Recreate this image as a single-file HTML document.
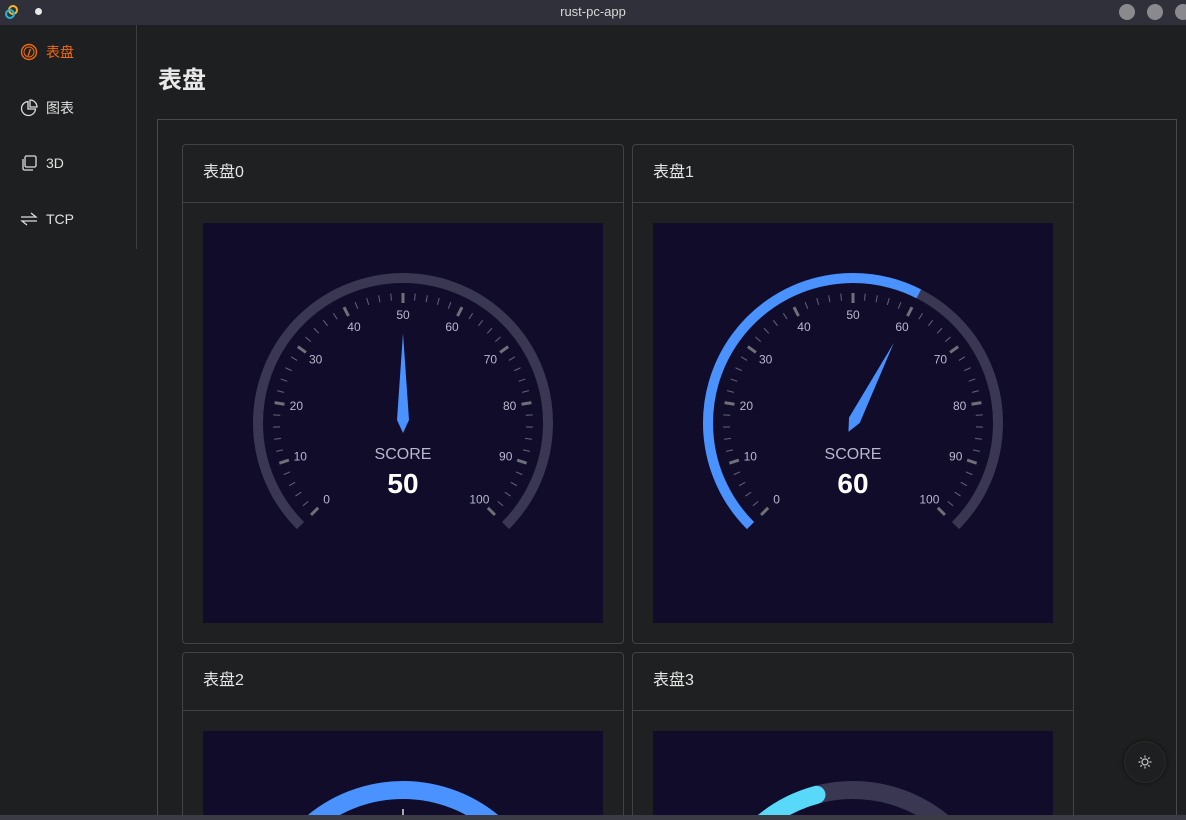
<!DOCTYPE html>
<html style="width:1186px;height:820px;overflow:hidden"><head><meta charset="utf-8">
<style>
*{margin:0;padding:0;box-sizing:border-box}
body{width:1186px;height:820px;overflow:hidden;background:#1e1f20;font-family:"Liberation Sans","Noto Sans CJK SC",sans-serif;color:#e5e5e5;position:relative}
#wrap{position:absolute;left:0;top:0;width:1186px;height:820px;overflow:hidden}
.tb{position:absolute;left:0;top:0;width:1186px;height:25px;background:#2f3039;}
.tb .t{position:absolute;left:0;width:1186px;top:4px;text-align:center;font-size:13px;color:#d8d8d8}
.tb .c{position:absolute;top:4px;width:16px;height:16px;border-radius:50%;background:#8a8a8e}
.side{position:absolute;left:0;top:25px;width:137px;height:224px;border-right:1px solid #3e3e3e}
.it{position:absolute;left:20px;font-size:14px;color:#e0e0e0;display:flex;align-items:center}
.it svg{margin-right:8px}
h1{position:absolute;left:158px;top:66px;font-size:24px;line-height:30px;font-weight:bold;color:#e8e8e8}
.box{position:absolute;left:157px;top:119px;width:1020px;height:701px;border:1px solid #4a4a4a;border-bottom:none}
.card{position:absolute;width:442px;height:500px;border:1px solid #414243;border-radius:4px;background:#1f2021;overflow:hidden}
.card.s{height:168px;border-bottom:none;border-radius:4px 4px 0 0}
.card .h{height:58px;border-bottom:1px solid #414243;padding:0 20px;line-height:55px;font-size:16px;color:#e5e5e5}
.card .ch{position:absolute;left:20px;top:78px;width:400px;height:400px;background:#100c2a;overflow:hidden}
.card.s .ch{height:89px}
.bb{position:absolute;left:0;top:815px;width:1186px;height:5px;background:#3a3b45;z-index:5}
.fab{position:absolute;left:1124px;top:741px;width:42px;height:42px;border-radius:50%;background:#1e1f20;box-shadow:0 0 4px rgba(0,0,0,.6);border:1px solid #2a2a2a}
</style></head><body><div id="wrap">
<div class="tb">
<svg style="position:absolute;left:4px;top:4px" width="16" height="16" viewBox="0 0 16 16"><circle cx="9" cy="6" r="4" fill="none" stroke="#f5b820" stroke-width="2"/><circle cx="6" cy="10" r="4" fill="none" stroke="#23b5d3" stroke-width="2"/></svg>
<div style="position:absolute;left:35px;top:8px;width:7px;height:7px;border-radius:50%;background:#e8e8e8"></div>
<div class="t">rust-pc-app</div>
<div class="c" style="left:1119px"></div><div class="c" style="left:1147px"></div>
<div style="position:absolute;left:1175px;top:4px;width:11px;height:16px;overflow:hidden"><div class="c" style="left:0;top:0"></div></div>
</div>
<div class="side">
<div class="it" style="top:17px;color:#f06a0f"><svg width="18" height="18" viewBox="0 0 18 18"><circle cx="9" cy="9" r="7.5" fill="none" stroke="#f06a0f" stroke-width="1.4"/><circle cx="9" cy="9" r="5" fill="none" stroke="#f06a0f" stroke-width="1"/><path d="M8 13 L10.5 6" stroke="#f06a0f" stroke-width="1.4"/></svg>表盘</div>
<div class="it" style="top:73px"><svg width="18" height="18" viewBox="0 0 18 18"><path d="M8 2.5 A7 7 0 1 0 15.5 10 L8 10 Z" fill="none" stroke="#ddd" stroke-width="1.3"/><path d="M10 1 A7 7 0 0 1 17 8 L10 8 Z" fill="none" stroke="#ddd" stroke-width="1.3"/></svg>图表</div>
<div class="it" style="top:129px"><svg width="18" height="18" viewBox="0 0 18 18"><rect x="5" y="2" width="11" height="11" rx="1.5" fill="none" stroke="#ddd" stroke-width="1.3"/><path d="M3 5 V14.5 a1.5 1.5 0 0 0 1.5 1.5 H13" fill="none" stroke="#ddd" stroke-width="1.3"/></svg>3D</div>
<div class="it" style="top:185px"><svg width="18" height="18" viewBox="0 0 18 18"><path d="M1 7 H16 L11 3 M17 11 H2 L7 15" fill="none" stroke="#ddd" stroke-width="1.3"/></svg>TCP</div>
</div>
<h1>表盘</h1>
<div class="box"></div>
<div class="card" style="left:182px;top:144px"><div class="h">表盘0</div><div class="ch"><svg id="g0" width="400" height="400"></svg></div></div>
<div class="card" style="left:632px;top:144px"><div class="h">表盘1</div><div class="ch"><svg id="g1" width="400" height="400"></svg></div></div>
<div class="card s" style="left:182px;top:652px"><div class="h">表盘2</div><div class="ch"><svg width="400" height="89" viewBox="0 0 400 89"><circle cx="200" cy="200" r="141" fill="none" stroke="#4992ff" stroke-width="18"/><rect x="199" y="78" width="2" height="11" fill="#aaa"/></svg></div></div>
<div class="card s" style="left:632px;top:652px"><div class="h">表盘3</div><div class="ch"><svg id="g3" width="400" height="89" viewBox="0 0 400 89"></svg></div></div>
<div class="fab"><svg style="position:absolute;left:13px;top:13px" width="14" height="14" viewBox="0 0 14 14"><circle cx="7" cy="7" r="3" fill="none" stroke="#ccc" stroke-width="1.2"/><path d="M7 0.5V2.5M7 11.5V13.5M0.5 7H2.5M11.5 7H13.5M2.4 2.4L3.8 3.8M10.2 10.2L11.6 11.6M2.4 11.6L3.8 10.2M10.2 3.8L11.6 2.4" stroke="#ccc" stroke-width="1.2"/></svg></div>
<div class="bb"></div>
</div>
<script>
var NS="http://www.w3.org/2000/svg";
function el(s,t,a){var e=document.createElementNS(NS,t);for(var k in a)e.setAttribute(k,a[k]);s.appendChild(e);return e}
function pt(cx,cy,r,deg){var a=deg*Math.PI/180;return [cx+r*Math.cos(a),cy-r*Math.sin(a)]}
function arc(cx,cy,r,a1,a2){var p=pt(cx,cy,r,a1),q=pt(cx,cy,r,a2);var large=(a1-a2)>180?1:0;return "M"+p[0]+" "+p[1]+" A"+r+" "+r+" 0 "+large+" 1 "+q[0]+" "+q[1]}
function gauge(id,val,prog){
var s=document.getElementById(id),cx=200,cy=200;
el(s,"path",{d:arc(cx,cy,145,225,-45),fill:"none",stroke:"#3a3753","stroke-width":10});
var va=225-val/100*270;
if(prog)el(s,"path",{d:arc(cx,cy,145,225,va),fill:"none",stroke:"#4992ff","stroke-width":10});
for(var i=0;i<=50;i++){var a=225-i*5.4;var maj=i%5==0;
var p=pt(cx,cy,maj?120:123,a),q=pt(cx,cy,130,a);
el(s,"line",{x1:p[0],y1:p[1],x2:q[0],y2:q[1],stroke:maj?"#6e7079":"#63677a","stroke-width":maj?3:1});
if(maj){var l=pt(cx,cy,108,a);var t=el(s,"text",{x:l[0],y:l[1]+4,"text-anchor":"middle","font-size":12,fill:"#b9b8ce","font-family":"Liberation Sans, sans-serif"});t.textContent=i*2;}}
var r=(90-va);
var g=el(s,"g",{transform:"rotate("+r+" "+cx+" "+cy+")"});
el(g,"polygon",{points:(cx)+","+(cy-90)+" "+(cx+6)+","+(cy-3)+" "+cx+","+(cy+10)+" "+(cx-6)+","+(cy-3),fill:"#4992ff"});
var t1=el(s,"text",{x:cx,y:cy+36,"text-anchor":"middle","font-size":16,fill:"#b9b8ce","font-family":"Liberation Sans, sans-serif"});t1.textContent="SCORE";
var t2=el(s,"text",{x:cx,y:cy+70,"text-anchor":"middle","font-size":28,"font-weight":"bold",fill:"#ffffff","font-family":"Liberation Sans, sans-serif"});t2.textContent=val;
}
gauge("g0",50,false);gauge("g1",60,true);
var s3=document.getElementById("g3");
el(s3,"path",{d:arc(200,200,141,225,-45),fill:"none",stroke:"#3a3753","stroke-width":18});
el(s3,"path",{d:arc(200,200,141,225,105),fill:"none",stroke:"#58d9f9","stroke-width":18,"stroke-linecap":"round"});
</script>
</body></html>
